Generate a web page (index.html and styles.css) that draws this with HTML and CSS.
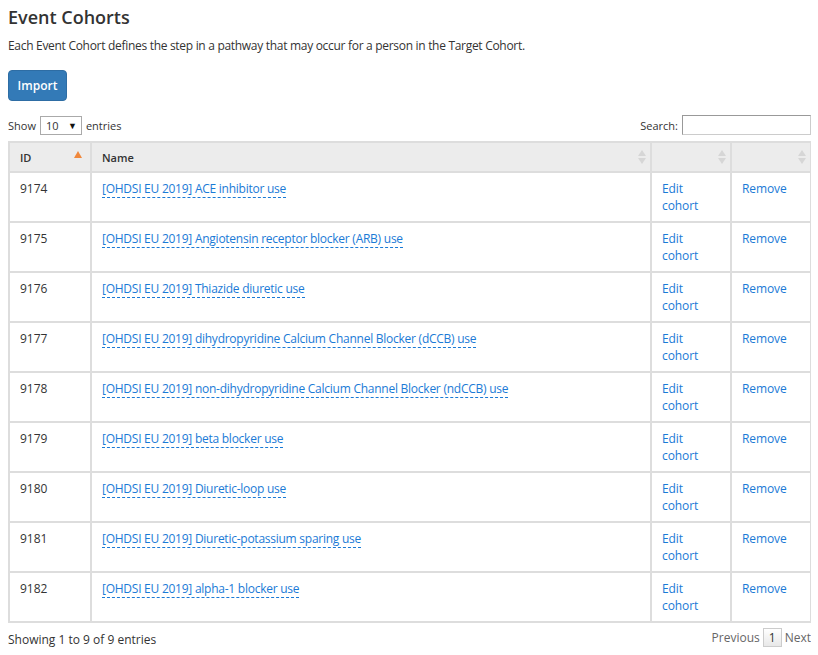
FILE: index.html
```html
<!DOCTYPE html>
<html>
<head>
<meta charset="utf-8">
<link rel="stylesheet" href="styles.css">
</head>
<body>
<h2 class="title">Event Cohorts</h2>
<p class="desc">Each Event Cohort defines the step in a pathway that may occur for a person in the Target Cohort.</p>
<button class="btn">Import</button>
<div class="controls">
  <label class="length">Show <span class="select">10 <span class="caret">▼</span></span> entries</label>
  <label class="search">Search: <span class="input"></span></label>
</div>
<table class="grid">
  <thead>
    <tr>
      <th class="c-id">ID<span class="sort asc"></span></th>
      <th class="c-name">Name<span class="sort both"></span></th>
      <th class="c-edit"><span class="sort both"></span></th>
      <th class="c-rm"><span class="sort both"></span></th>
    </tr>
  </thead>
  <tbody>
    <tr><td>9174</td><td><a class="name">[OHDSI EU 2019] ACE inhibitor use</a></td><td><a class="act">Edit<br>cohort</a></td><td><a class="act">Remove</a></td></tr>
    <tr><td>9175</td><td><a class="name">[OHDSI EU 2019] Angiotensin receptor blocker (ARB) use</a></td><td><a class="act">Edit<br>cohort</a></td><td><a class="act">Remove</a></td></tr>
    <tr><td>9176</td><td><a class="name">[OHDSI EU 2019] Thiazide diuretic use</a></td><td><a class="act">Edit<br>cohort</a></td><td><a class="act">Remove</a></td></tr>
    <tr><td>9177</td><td><a class="name">[OHDSI EU 2019] dihydropyridine Calcium Channel Blocker (dCCB) use</a></td><td><a class="act">Edit<br>cohort</a></td><td><a class="act">Remove</a></td></tr>
    <tr><td>9178</td><td><a class="name">[OHDSI EU 2019] non-dihydropyridine Calcium Channel Blocker (ndCCB) use</a></td><td><a class="act">Edit<br>cohort</a></td><td><a class="act">Remove</a></td></tr>
    <tr><td>9179</td><td><a class="name">[OHDSI EU 2019] beta blocker use</a></td><td><a class="act">Edit<br>cohort</a></td><td><a class="act">Remove</a></td></tr>
    <tr><td>9180</td><td><a class="name">[OHDSI EU 2019] Diuretic-loop use</a></td><td><a class="act">Edit<br>cohort</a></td><td><a class="act">Remove</a></td></tr>
    <tr><td>9181</td><td><a class="name">[OHDSI EU 2019] Diuretic-potassium sparing use</a></td><td><a class="act">Edit<br>cohort</a></td><td><a class="act">Remove</a></td></tr>
    <tr><td>9182</td><td><a class="name">[OHDSI EU 2019] alpha-1 blocker use</a></td><td><a class="act">Edit<br>cohort</a></td><td><a class="act">Remove</a></td></tr>
  </tbody>
</table>
<div class="footer">
  <div class="info">Showing 1 to 9 of 9 entries</div>
  <div class="pager"><span class="pg">Previous</span><span class="pg cur">1</span><span class="pg">Next</span></div>
</div>
</body>
</html>
```
FILE: styles.css
```css
body {
  margin: 8px 7px 8px 8px;
  font-family: "Open Sans", "Noto Sans", sans-serif;
  font-size: 12px;
  color: #333;
  background: #fff;
}
.title {
  margin: 0;
  padding-top: 0;
  font-size: 18px;
  font-weight: 600;
  line-height: 18px;
  color: #333;
}
.desc {
  margin: 0;
  padding-top: 11px;
  line-height: 17px;
  letter-spacing: -0.3px;
}
.btn {
  margin-top: 16px;
  display: block;
  width: 59px;
  height: 31px;
  background: #337ab7;
  border: 1px solid #2e6da4;
  border-radius: 4px;
  color: #fff;
  font-family: inherit;
  font-size: 12px;
  font-weight: 600;
  padding: 0;
}
.controls {
  display: flex;
  justify-content: space-between;
  align-items: center;
  margin-top: 14px;
  height: 20px;
}
.length, .search {
  display: flex;
  align-items: center;
  gap: 4px;
  font-size: 11px;
}
.select {
  display: inline-flex;
  justify-content: space-between;
  align-items: center;
  box-sizing: border-box;
  width: 42px;
  height: 19px;
  border: 1px solid #aaa;
  padding: 0 4px 0 5px;
  font-size: 11px;
}
.caret { font-size: 9px; color: #111; }
.search .input {
  display: inline-block;
  box-sizing: border-box;
  width: 129px;
  height: 20px;
  border: 1px solid #ccc;
  border-top-color: #999;
  border-left-color: #999;
}
.grid {
  margin-top: 6px;
  width: 804px;
  border-collapse: collapse;
  border: 2px solid #ddd;
  table-layout: fixed;
}
.grid th, .grid td {
  box-sizing: border-box;
  border: 2px solid #ddd;
  text-align: left;
  vertical-align: top;
}
.grid th {
  position: relative;
  background: #ececec;
  height: 30px;
  padding: 0 10px;
  font-weight: 600;
  font-size: 11px;
  vertical-align: middle;
}
.grid td {
  height: 50px;
  padding: 7px 10px 0;
  line-height: 17px;
}
.c-id { width: 82px; }
.c-edit, .c-rm { width: 80px; }
a { color: #1a7ad6; cursor: pointer; }
.name {
  border-bottom: 1px dashed #1a7ad6;
  letter-spacing: -0.25px;
}
.act { letter-spacing: -0.1px; }
.sort {
  position: absolute;
  right: 8px;
  top: 50%;
  width: 0;
  height: 0;
}
.sort.asc {
  margin-top: -6px;
  border-left: 4px solid transparent;
  border-right: 4px solid transparent;
  border-bottom: 7px solid #f0883c;
}
.sort.both::before, .sort.both::after {
  content: "";
  position: absolute;
  left: -4px;
  border-left: 4px solid transparent;
  border-right: 4px solid transparent;
}
.sort.both::before {
  top: -7px;
  border-bottom: 6px solid #d6d6d6;
}
.sort.both::after {
  top: 1px;
  border-top: 6px solid #d6d6d6;
}
.footer {
  display: flex;
  justify-content: space-between;
  align-items: center;
  margin-top: 3px;
}
.info { padding-top: 5px; font-size: 12px; }
.pager { display: flex; align-items: center; gap: 3px; color: #666; margin-right: 0; }
.pg.cur {
  box-sizing: border-box;
  display: inline-block;
  height: 19px;
  padding: 0 5px;
  line-height: 17px;
  border: 1px solid #ccc;
  background: linear-gradient(#fff, #e8e8e8);
  color: #333;
}
```
